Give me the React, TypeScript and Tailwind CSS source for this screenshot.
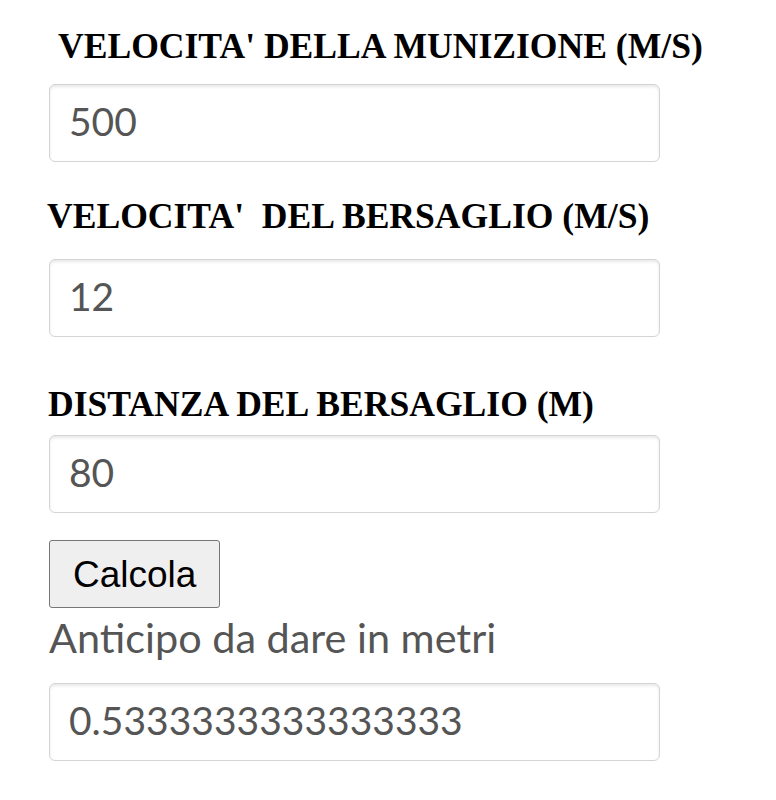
import React from "react";

function Field({ value }: { value: string }) {
  return (
    <div className="w-[611px] h-[78px] rounded-[6px] border border-[#d4d4d4] bg-white shadow-[inset_0_2px_3px_rgba(0,0,0,0.09)] flex items-center pl-[19px] pb-[3px] text-[39px] text-[#555] font-['Lato',sans-serif] box-border">
      {value}
    </div>
  );
}

function Label({ children, extra }: { children: React.ReactNode; extra?: string }) {
  return (
    <div className={"font-['Liberation_Serif',serif] font-bold text-[35.6px] leading-[40px] text-black whitespace-pre " + (extra ?? "")}>
      {children}
    </div>
  );
}

export default function App() {
  return (
    <div className="w-[776px] h-[800px] bg-white flex flex-col pl-[49px]">
      <div className="mt-[26px]">
        <Label extra="ml-[9px]">VELOCITA' DELLA MUNIZIONE (M/S)</Label>
      </div>
      <div className="mt-[18px]">
        <Field value="500" />
      </div>
      <div className="mt-[34px]">
        <Label extra="-ml-[2px]">{"VELOCITA'  DEL BERSAGLIO (M/S)"}</Label>
      </div>
      <div className="mt-[23px]">
        <Field value="12" />
      </div>
      <div className="mt-[47px]">
        <Label extra="-ml-[1px]">DISTANZA DEL BERSAGLIO (M)</Label>
      </div>
      <div className="mt-[11px]">
        <Field value="80" />
      </div>
      <div className="mt-[27px]">
        <button className="h-[68px] px-[23px] bg-[#efefef] border border-[#767676] rounded-[3px] font-['Liberation_Sans',sans-serif] text-[37px] text-black leading-none">
          Calcola
        </button>
      </div>
      <div className="font-['Lato',sans-serif] text-[41.4px] leading-[52px] text-[#555] mt-[3px]">
        Anticipo da dare in metri
      </div>
      <div className="mt-[20px]">
        <Field value="0.5333333333333333" />
      </div>
    </div>
  );
}
